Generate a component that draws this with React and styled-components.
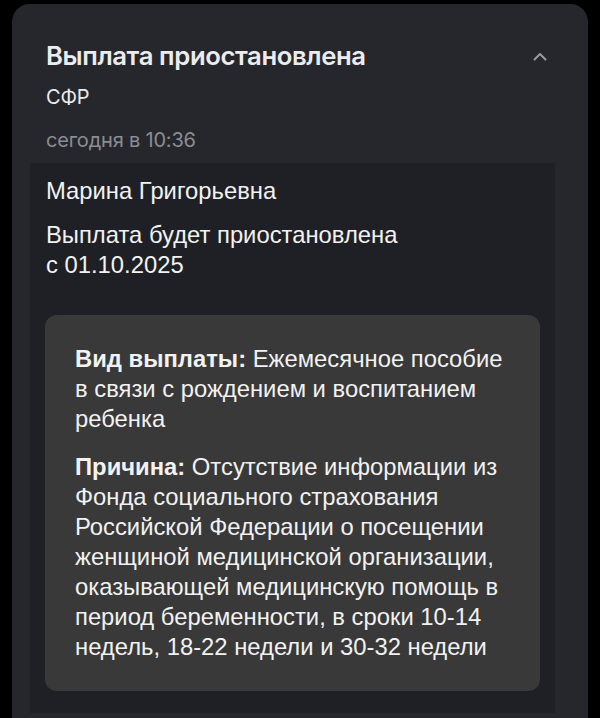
import styled, { createGlobalStyle } from 'styled-components'

const GlobalStyle = createGlobalStyle`
  html, body {
    margin: 0;
    padding: 0;
    background: #000;
  }
  body {
    font-family: Inter, "Liberation Sans", sans-serif;
  }
`

const Page = styled.div`
  height: 718px;
  overflow: hidden;
  padding: 4px 12px 0;
  box-sizing: border-box;
`

const Card = styled.div`
  background: #26272c;
  border-radius: 18px;
  padding: 0 33px 20px 18px;
  min-height: 760px;
  box-sizing: border-box;
`

const Header = styled.div`
  display: flex;
  align-items: flex-start;
  justify-content: space-between;
  padding: 37px 0 0 16px;
`

const Title = styled.h1`
  margin: 0;
  font-family: Inter, "Liberation Sans", sans-serif;
  font-size: 25.7px;
  font-weight: 600;
  line-height: 30px;
  letter-spacing: -0.4px;
  color: #ececee;
`

const Chevron = styled.button`
  border: 0;
  background: none;
  padding: 0;
  margin: 11px 8px 0 0;
  color: #9a9ba0;
  display: flex;
`

const Meta = styled.div`
  padding-left: 16px;
  font-family: Inter, "Liberation Sans", sans-serif;
  font-size: 20px;
  line-height: 24px;
  color: ${(props) => (props.muted ? '#8c8d92' : '#ececee')};
  margin-top: ${(props) => props.gap}px;
  letter-spacing: -0.2px;
`

const Panel = styled.div`
  margin-top: 11px;
  background: #1f2025;
  padding: 13px 16px 22px;
  font-family: "Liberation Sans", Arial, sans-serif;
  color: #f2f2f2;
  font-size: 23.8px;
  line-height: 30px;
`

const Line = styled.p`
  margin: 0 0 ${(props) => props.after || 0}px;
`

const Details = styled.div`
  margin: 35px -1px 0;
  background: #393939;
  border-radius: 12px;
  padding: 29px 28px 29px 30px;
  display: flex;
  flex-direction: column;
  gap: 18px;
`

const Label = styled.b`
  font-weight: 700;
`

export default function App() {
  return (
    <>
      <GlobalStyle />
      <Page>
        <Card>
          <Header>
            <Title>Выплата приостановлена</Title>
            <Chevron aria-label="Свернуть">
              <svg width="14" height="9" viewBox="0 0 14 9" fill="none">
                <path d="M1.5 7.5L7 2l5.5 5.5" stroke="currentColor" strokeWidth="2" strokeLinecap="round" strokeLinejoin="round" />
              </svg>
            </Chevron>
          </Header>
          <Meta gap={14}>СФР</Meta>
          <Meta gap={19} muted>сегодня в 10:36</Meta>
          <Panel>
            <Line after={14}>Марина Григорьевна</Line>
            <Line>Выплата будет приостановлена</Line>
            <Line>с 01.10.2025</Line>
            <Details>
              <Line>
                <Label>Вид выплаты:</Label> Ежемесячное пособие в связи с рождением и воспитанием ребенка
              </Line>
              <Line>
                <Label>Причина:</Label> Отсутствие информации из Фонда социального страхования Российской Федерации о посещении женщиной медицинской организации, оказывающей медицинскую помощь в период беременности, в сроки 10-14 недель, 18-22 недели и 30-32 недели
              </Line>
            </Details>
          </Panel>
        </Card>
      </Page>
    </>
  )
}
